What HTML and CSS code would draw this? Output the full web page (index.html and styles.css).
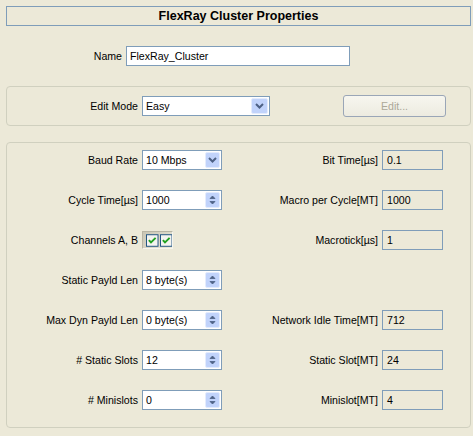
FILE: index.html
```html
<!DOCTYPE html>
<html>
<head>
<meta charset="utf-8">
<link rel="stylesheet" href="styles.css">
</head>
<body>
<div class="panel">
  <div class="title">FlexRay Cluster Properties</div>

  <div class="name-row">
    <span class="name-label">Name</span>
    <div class="input name-input">FlexRay_Cluster</div>
  </div>

  <div class="group edit-group">
    <span class="lbl">Edit Mode</span>
    <div class="input combo edit-combo">
      <span class="val">Easy</span>
      <span class="btn btn-wide"><svg width="17" height="16" viewBox="0 0 17 16"><rect x="0.5" y="0.5" width="16" height="15" rx="1.5" fill="#C1D3FB" stroke="#E4ECFD"/><path d="M5 6 L8.5 9.5 L12 6" fill="none" stroke="#4D6185" stroke-width="2"/></svg></span>
    </div>
    <div class="edit-btn">Edit...</div>
  </div>

  <div class="group props">
    <div class="row">
      <span class="lbl">Baud Rate</span>
      <div class="input combo field">
        <span class="val">10 Mbps</span>
        <span class="btn"><svg width="15" height="16" viewBox="0 0 15 16"><rect x="0.5" y="0.5" width="14" height="15" rx="1.5" fill="#C1D3FB" stroke="#E4ECFD"/><path d="M4 6 L7.5 9.5 L11 6" fill="none" stroke="#4D6185" stroke-width="2"/></svg></span>
      </div>
      <span class="rlbl">Bit Time[µs]</span>
      <div class="ro">0.1</div>
    </div>

    <div class="row">
      <span class="lbl">Cycle Time[µs]</span>
      <div class="input combo field">
        <span class="val">1000</span>
        <span class="btn"><svg width="15" height="16" viewBox="0 0 15 16"><rect x="0.5" y="0.5" width="14" height="15" rx="1.5" fill="#C1D3FB" stroke="#E4ECFD"/><path d="M5 6.5 L7.5 4 L10 6.5 Z M5 9.5 L7.5 12 L10 9.5 Z" fill="#4D6185" stroke="#4D6185" stroke-width="0.8"/></svg></span>
      </div>
      <span class="rlbl">Macro per Cycle[MT]</span>
      <div class="ro">1000</div>
    </div>

    <div class="row">
      <span class="lbl">Channels A, B</span>
      <div class="checks">
        <svg width="13" height="13" viewBox="0 0 13 13"><rect x="0.5" y="0.5" width="12" height="12" fill="#F4F4F0" stroke="#1C5180"/><path d="M3 6 L5.2 8.5 L10 3.8" fill="none" stroke="#21A121" stroke-width="2"/></svg>
        <svg width="13" height="13" viewBox="0 0 13 13"><rect x="0.5" y="0.5" width="12" height="12" fill="#F4F4F0" stroke="#1C5180"/><path d="M3 6 L5.2 8.5 L10 3.8" fill="none" stroke="#21A121" stroke-width="2"/></svg>
      </div>
      <span class="rlbl">Macrotick[µs]</span>
      <div class="ro">1</div>
    </div>

    <div class="row">
      <span class="lbl">Static Payld Len</span>
      <div class="input combo field">
        <span class="val">8 byte(s)</span>
        <span class="btn"><svg width="15" height="16" viewBox="0 0 15 16"><rect x="0.5" y="0.5" width="14" height="15" rx="1.5" fill="#C1D3FB" stroke="#E4ECFD"/><path d="M5 6.5 L7.5 4 L10 6.5 Z M5 9.5 L7.5 12 L10 9.5 Z" fill="#4D6185" stroke="#4D6185" stroke-width="0.8"/></svg></span>
      </div>
      <span class="rlbl"></span>
      <div class="ro-empty"></div>
    </div>

    <div class="row">
      <span class="lbl">Max Dyn Payld Len</span>
      <div class="input combo field">
        <span class="val">0 byte(s)</span>
        <span class="btn"><svg width="15" height="16" viewBox="0 0 15 16"><rect x="0.5" y="0.5" width="14" height="15" rx="1.5" fill="#C1D3FB" stroke="#E4ECFD"/><path d="M5 6.5 L7.5 4 L10 6.5 Z M5 9.5 L7.5 12 L10 9.5 Z" fill="#4D6185" stroke="#4D6185" stroke-width="0.8"/></svg></span>
      </div>
      <span class="rlbl">Network Idle Time[MT]</span>
      <div class="ro">712</div>
    </div>

    <div class="row">
      <span class="lbl"># Static Slots</span>
      <div class="input combo field">
        <span class="val">12</span>
        <span class="btn"><svg width="15" height="16" viewBox="0 0 15 16"><rect x="0.5" y="0.5" width="14" height="15" rx="1.5" fill="#C1D3FB" stroke="#E4ECFD"/><path d="M5 6.5 L7.5 4 L10 6.5 Z M5 9.5 L7.5 12 L10 9.5 Z" fill="#4D6185" stroke="#4D6185" stroke-width="0.8"/></svg></span>
      </div>
      <span class="rlbl">Static Slot[MT]</span>
      <div class="ro">24</div>
    </div>

    <div class="row">
      <span class="lbl"># Minislots</span>
      <div class="input combo field">
        <span class="val">0</span>
        <span class="btn"><svg width="15" height="16" viewBox="0 0 15 16"><rect x="0.5" y="0.5" width="14" height="15" rx="1.5" fill="#C1D3FB" stroke="#E4ECFD"/><path d="M5 6.5 L7.5 4 L10 6.5 Z M5 9.5 L7.5 12 L10 9.5 Z" fill="#4D6185" stroke="#4D6185" stroke-width="0.8"/></svg></span>
      </div>
      <span class="rlbl">Minislot[MT]</span>
      <div class="ro">4</div>
    </div>
  </div>
</div>
</body>
</html>
```

FILE: styles.css
```css
html, body {
  margin: 0;
  padding: 0;
  background: #ECE9D8;
}
body {
  font-family: "Liberation Sans", Arial, sans-serif;
  font-size: 10.6px;
  color: #000;
}
.panel {
  width: 465px;
  padding: 6px 0 0 6px;
  display: flex;
  flex-direction: column;
}
.title {
  height: 18px;
  border: 1px solid #7F9DB9;
  text-align: center;
  font-weight: bold;
  font-size: 12.5px;
  line-height: 18px;
}
.name-row {
  display: flex;
  align-items: center;
  margin-top: 20px;
}
.name-label {
  width: 116px;
  text-align: right;
  margin-right: 4px;
}
.input {
  box-sizing: border-box;
  height: 20px;
  border: 1px solid #7F9DB9;
  background: #fff;
  display: flex;
  align-items: center;
  padding-left: 3px;
}
.name-input {
  width: 224px;
}
.group {
  border: 1px solid #D0D0BF;
  border-radius: 4px;
}
.edit-group {
  margin-top: 20px;
  height: 38px;
  display: flex;
  align-items: center;
}
.lbl {
  width: 131px;
  text-align: right;
  margin-right: 4px;
  flex: none;
}
.combo {
  justify-content: space-between;
  padding-right: 1px;
}
.btn {
  display: flex;
}
.edit-combo {
  width: 128px;
}
.edit-btn {
  box-sizing: border-box;
  margin-left: 73px;
  width: 103px;
  height: 22px;
  border: 1px solid #9AA6B7;
  border-radius: 3px;
  background: linear-gradient(#F7F6EF, #EDEBE0);
  color: #ACA899;
  display: flex;
  align-items: center;
  justify-content: center;
}
.props {
  margin-top: 16px;
  padding: 7px 27px 17px 0;
  display: flex;
  flex-direction: column;
  gap: 20px;
}
.row {
  display: flex;
  align-items: center;
  height: 20px;
}
.field {
  width: 80px;
  flex: none;
}
.rlbl {
  flex: 1;
  text-align: right;
  margin-right: 4px;
}
.ro {
  box-sizing: border-box;
  width: 61px;
  height: 20px;
  border: 1px solid #7F9DB9;
  padding-left: 4px;
  display: flex;
  align-items: center;
}
.ro-empty {
  width: 61px;
}
.checks {
  box-sizing: border-box;
  width: 31px;
  height: 18px;
  display: flex;
  align-items: center;
  justify-content: center;
  gap: 1px;
  background: linear-gradient(135deg, #C9C6B5, #DCD9C9 60%, #ECE9D8);
  border-top: 1px solid #B8B5A4;
  border-left: 1px solid #B8B5A4;
  border-right: 1px solid #F6F5EE;
  border-bottom: 1px solid #F6F5EE;
  flex: none;
  padding-left: 3px;
}
```
